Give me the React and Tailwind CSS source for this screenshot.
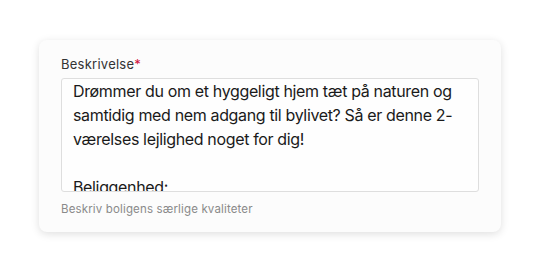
import React from "react";

const lines = [
  "Drømmer du om et hyggeligt hjem tæt på naturen og",
  "samtidig med nem adgang til bylivet? Så er denne 2-",
  "værelses lejlighed noget for dig!",
  "\u00a0",
  "Beliggenhed:",
];

const App = () => {
  return (
    <div
      className="h-screen w-full bg-white flex items-center justify-center"
      style={{ fontFamily: "Inter, 'Noto Sans', sans-serif" }}
    >
      <div className="w-[462px] h-[192px] bg-[#fcfcfc] rounded-lg shadow-[0_2px_8px_rgba(0,0,0,0.13)] px-[22px] pt-[14px]">
        <label className="block text-[13px] leading-[20px] tracking-[0.25px] text-[#333]">
          Beskrivelse<span className="text-[#d0103a]">*</span>
        </label>
        <div className="mt-[4px] h-[114px] overflow-hidden rounded-[3px] border border-[#dedede] bg-[#fefefe] px-[11px] text-[16px] leading-[24px] tracking-[-0.35px] text-[#1a1a1a]">
          {lines.map((l, i) => (
            <div key={i} className="whitespace-nowrap">
              {l}
            </div>
          ))}
        </div>
        <p className="mt-[9px] text-[11.5px] leading-[16px] tracking-[0.15px] text-[#8a8a8a]">
          Beskriv boligens særlige kvaliteter
        </p>
      </div>
    </div>
  );
};

export default App;
